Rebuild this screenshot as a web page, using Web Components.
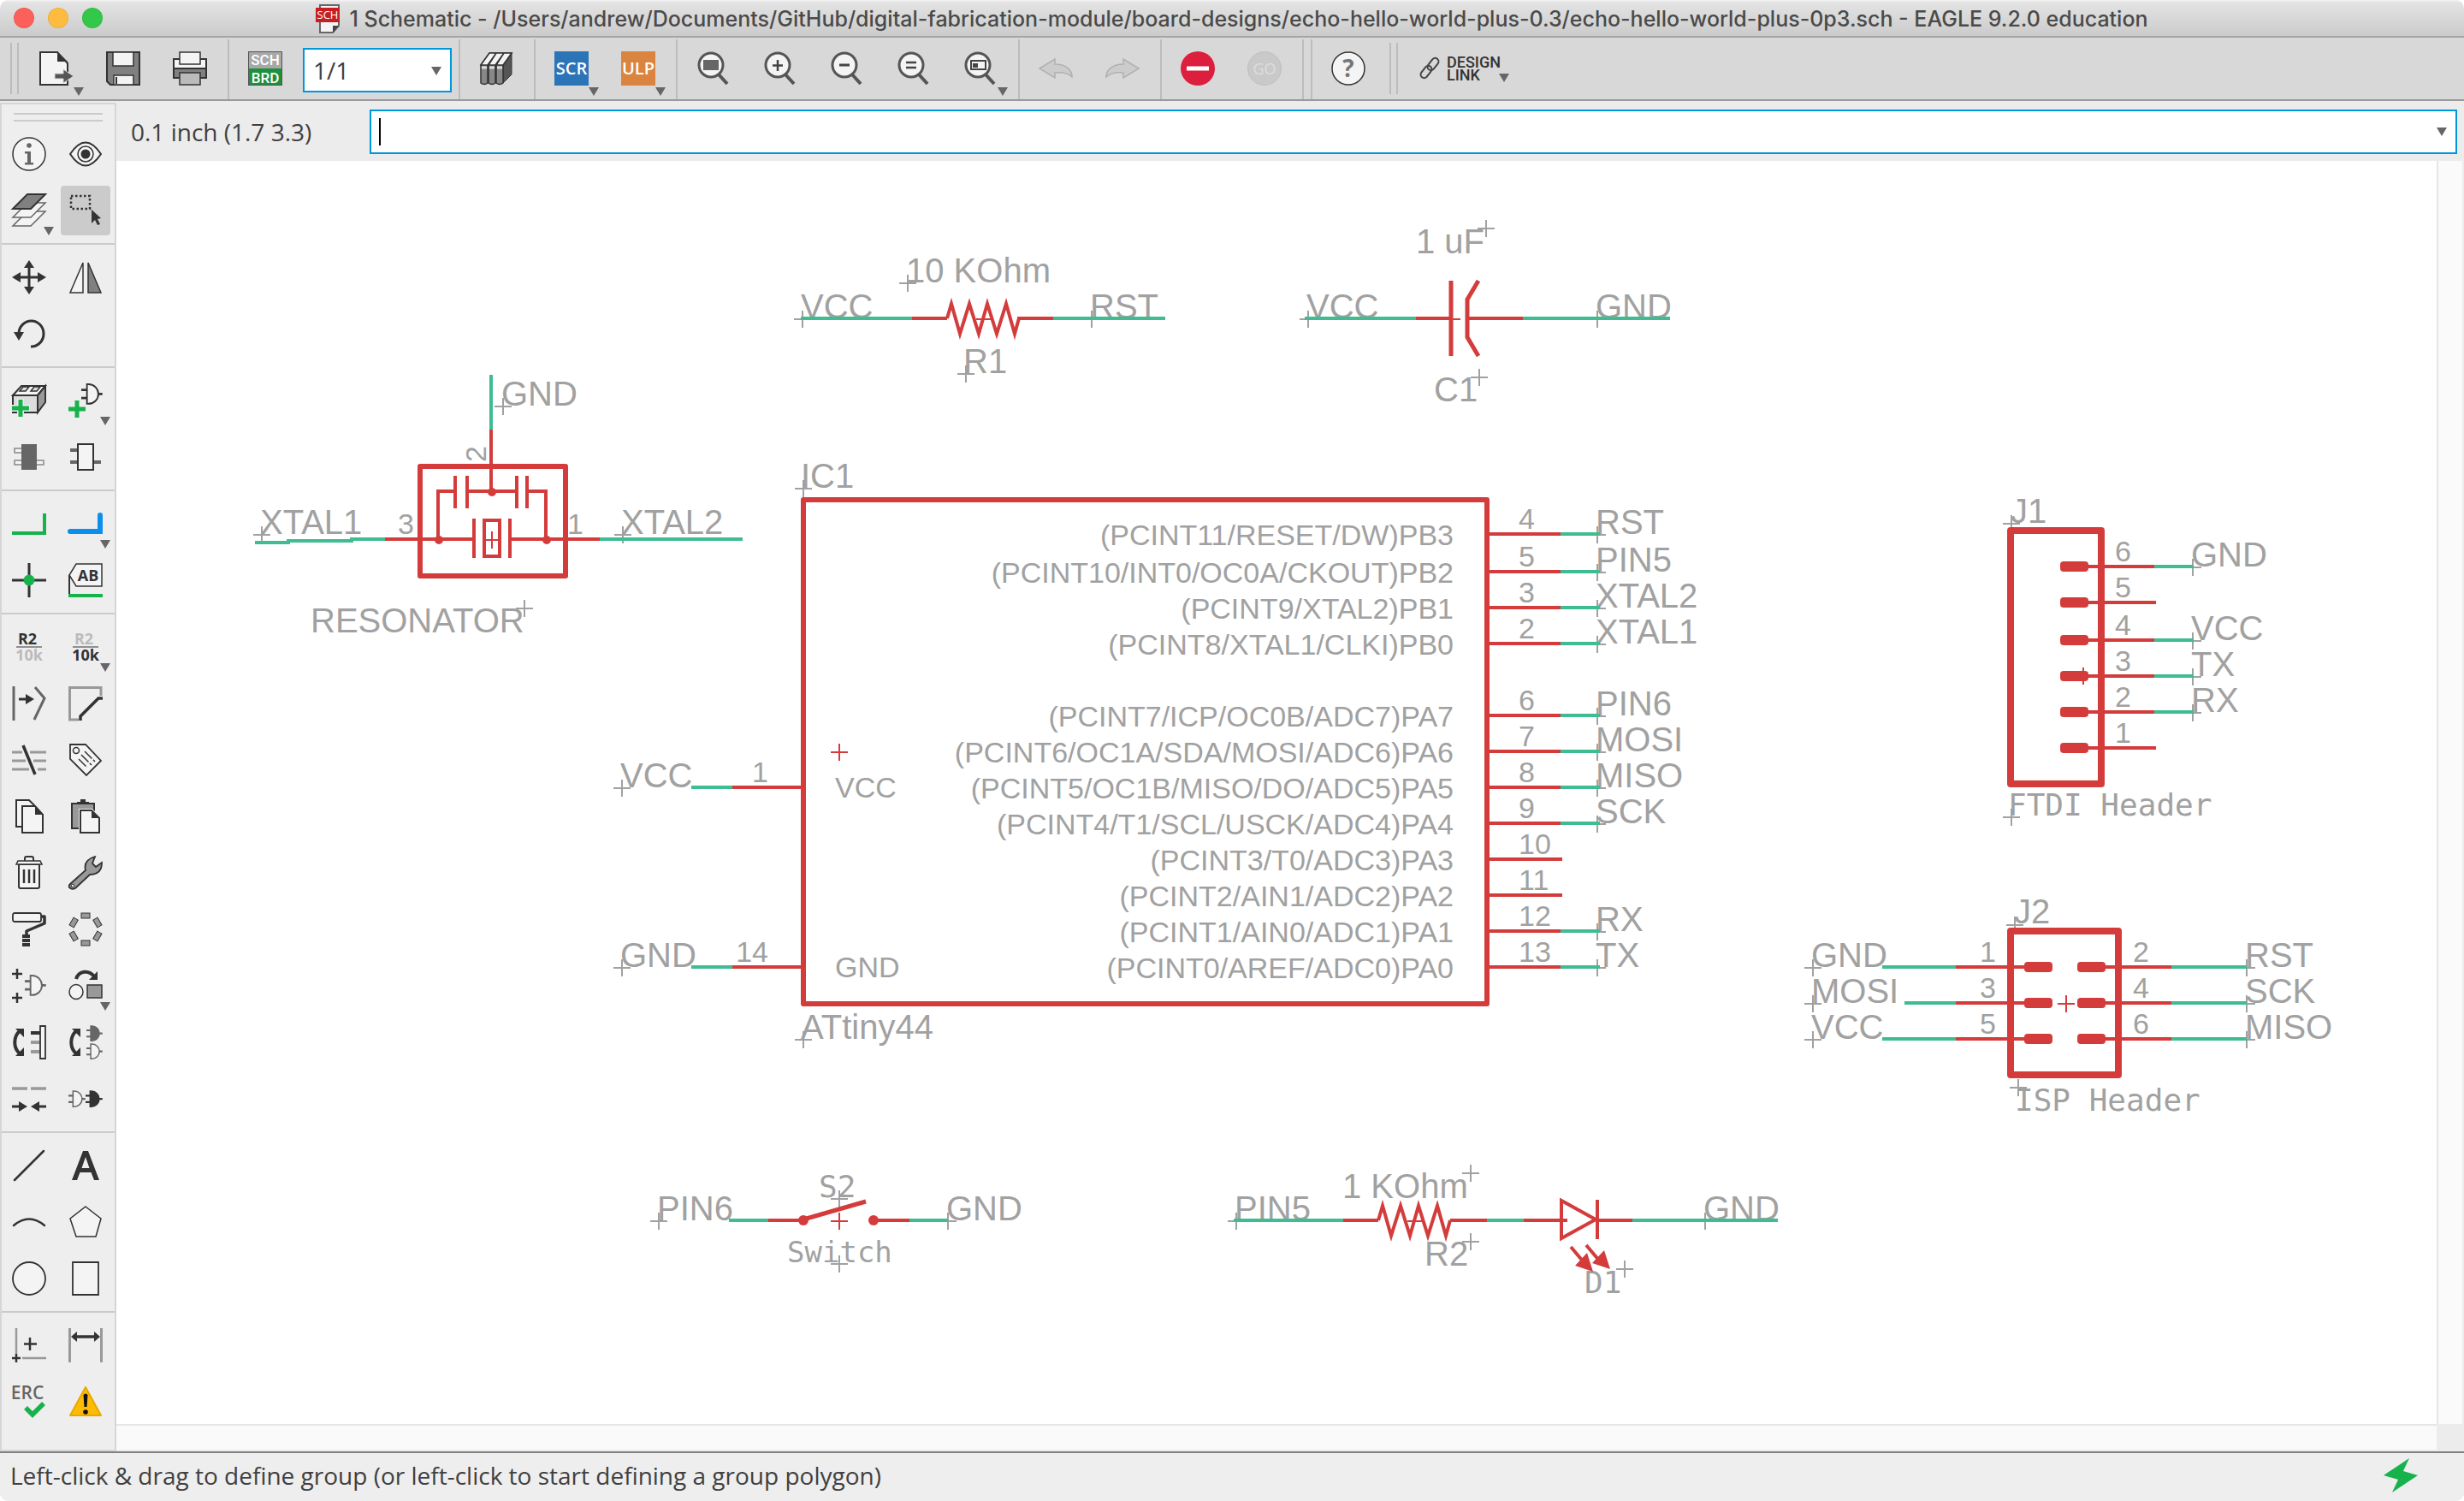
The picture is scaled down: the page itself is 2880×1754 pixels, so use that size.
<!DOCTYPE html>
<html lang="en">
<head>
<meta charset="utf-8">
<title>1 Schematic - EAGLE 9.2.0 education</title>
<style>
html,body{margin:0;height:100%;background:#fff}
body{font-family:"Open Sans","Noto Sans",sans-serif;font-size:28px;color:#404040}
</style>
</head>
<body>
<eagle-window></eagle-window>
<script>
const D='#333', G='#666', L='#999', W='#f4f4f4', GR='#16b24b';
const gate=(x,y,s,c,f)=>`<g transform="translate(${x} ${y}) scale(${s})" stroke="${c}" fill="${f}" stroke-width="2"><path d="M0 7H7M0 17H7M19 12H26" stroke-width="3"/><path d="M7 0V24H9A12 12 0 0 0 9 0Z"/></g>`;
const lens=inner=>`<path d="M26 27L36 38" stroke="#555" stroke-width="4"/><circle cx="17" cy="16" r="14" fill="${W}" stroke="#555" stroke-width="3"/>${inner}`;
const arrowUndo=`<path d="M1 20L19 9V15C31 15 39 21 39 30C34 25 28 24 19 25V31Z" fill="#ccc" stroke="#b0b0b0" stroke-width="1.5"/>`;
const swap=`<path d="M10 6C1 13 1 27 10 34" fill="none" stroke="${D}" stroke-width="4"/><path d="M4 4H14V14ZM4 36H14V26Z" fill="${D}"/>`;
const txt=(x,y,s,w,f,t,a='middle')=>`<text x="${x}" y="${y}" font-size="${s}" font-weight="${w}" fill="${f}" text-anchor="${a}">${t}</text>`;
const ICONS={
 newdoc:`<path d="M1 1H21L33 14V39H1Z" fill="${W}" stroke="${D}" stroke-width="2"/><path d="M21 1V12H33Z" fill="${D}"/><path d="M18 26H28V21L40 29L28 37V32H18Z" fill="#555" stroke="#d8d8d8" stroke-width="1"/>`,
 save:`<path d="M1 1H39V39H5L1 35Z" fill="#808080" stroke="${D}" stroke-width="2"/><path d="M8 1H32V17H8ZM9 28H32V39H9Z" fill="${W}" stroke="${D}" stroke-width="1.5"/><path d="M12 30V38" stroke="${D}" stroke-width="2"/>`,
 print:`<path d="M1 9H39V31H1Z" fill="${W}" stroke="${D}" stroke-width="2"/><path d="M1 20H39V31H1Z" fill="#808080" stroke="${D}" stroke-width="2"/><path d="M8 1H32V15H8Z" fill="${W}" stroke="${D}" stroke-width="1.5"/><path d="M8 25H32V39H8Z" fill="#bbb" stroke="${D}" stroke-width="1.5"/>`,
 schbrd:`<path d="M0 0H40V20H0Z" fill="#a8a8a8"/><path d="M0 20H40V40H0Z" fill="#1d8f3f"/><rect x=".5" y=".5" width="39" height="39" fill="none" stroke="#555"/><g font-family="Roboto">${txt(20,16,17,500,'#fff','SCH')}${txt(20,37,17,500,'#fff','BRD')}</g>`,
 lib:`<path d="M28 37L38 27V3L28 15Z" fill="#555" stroke="${D}"/><g stroke="${D}" stroke-width="1.5"><path d="M2 16L12 2H20L10 16V37Q6 40 2 37ZM11 16L20 2H29L19 16V37Q15 40 11 37ZM20 16L29 2H38L28 16V37Q24 40 20 37Z" fill="#888"/><path d="M2 16L12 2H20L10 16ZM11 16L20 2H29L19 16ZM20 16L29 2H38L28 16Z" fill="${W}"/></g><path d="M3 19H9M12 19H18M21 19H27" stroke="#ddd" stroke-width="3"/>`,
 scr:`<path d="M0 0H40V40H0Z" fill="#2c74b8"/>${txt(20,27,20,600,'#fff','SCR')}`,
 ulp:`<path d="M0 0H40V40H0Z" fill="#db843f"/>${txt(20,27,20,600,'#fff','ULP')}`,
 zfit:lens(`<path d="M8 10H26V22H8Z" fill="#666"/>`),
 zin:lens(`<path d="M17 10V23M11 16.500H23" stroke="#444" stroke-width="2.500"/>`),
 zout:lens(`<path d="M11 16H23" stroke="#444" stroke-width="3"/>`),
 zre:lens(`<path d="M11 13H23M11 19H23" stroke="#444" stroke-width="2.500"/>`),
 zsel:lens(`<path d="M9 11H26V21H9Z" fill="none" stroke="#444" stroke-width="2"/><path d="M11 14H17V19H11Z" fill="#444"/>`),
 undo:arrowUndo, redo:`<g transform="translate(40 0) scale(-1 1)">${arrowUndo}</g>`,
 stop:`<circle cx="20" cy="20" r="20" fill="#dc1f3c"/><path d="M7 17.500H33V22.500H7Z" fill="#fff"/>`,
 go:`<circle cx="20" cy="20" r="19.500" fill="#c9c9c9" stroke="#c0c0c0"/>${txt(20,27,18,400,'#dedede','GO')}`,
 help:`<circle cx="20" cy="20" r="19" fill="${W}" stroke="${D}" stroke-width="1.500"/>${txt(20,30,28,700,'#777','?')}`,
 link:`<g fill="none" stroke="#444" stroke-width="2"><rect x="-8" y="-4" width="16" height="8" rx="4" transform="translate(15 24) rotate(-52)"/><rect x="-8" y="-4" width="16" height="8" rx="4" transform="translate(23 15) rotate(-52)"/></g>`,
 info:`<circle cx="20" cy="20" r="19" fill="${W}" stroke="${D}" stroke-width="1.500"/><circle cx="20" cy="10" r="2.800" fill="${G}"/><path d="M15 17H22V30H25V32.500H15V30H18V19.500H15Z" fill="${G}"/>`,
 eye:`<path d="M2 20Q20 -7 38 20Q20 47 2 20Z" fill="${W}" stroke="${D}" stroke-width="2"/><circle cx="20" cy="20" r="9" fill="none" stroke="${D}" stroke-width="1.500"/><circle cx="20" cy="20" r="5.500" fill="${D}"/>`,
 layers:`<path d="M18 21H39L22 38H1Z" fill="${W}" stroke="${G}" stroke-width="1.500"/><path d="M18 11H39L22 28H1Z" fill="${W}" stroke="${G}" stroke-width="1.500"/><path d="M18 1H39L22 18H1Z" fill="#808080" stroke="${D}" stroke-width="2"/>`,
 group:`<path d="M3 3H25V18H3Z" fill="none" stroke="${D}" stroke-width="2.500" stroke-dasharray="2.500 2.500"/><path d="M27 19V35L31 31L34 37L37 36L34 30L38 29Z" fill="${D}"/>`,
 move:`<path d="M20 6V34M6 20H34" stroke="${D}" stroke-width="3"/><path d="M20 0L26 9H14ZM20 40L26 31H14ZM0 20L10 14V26ZM40 20L30 14V26Z" fill="${D}"/>`,
 mirror:`<path d="M17 3V38H2Z" fill="${W}" stroke="${D}" stroke-width="1.500"/><path d="M23 3V38H38Z" fill="#808080" stroke="${D}" stroke-width="1.500"/>`,
 rotate:`<path d="M8 20A14.500 15 0 1 1 22 35" fill="none" stroke="${D}" stroke-width="3"/><path d="M2 18H14L8 28Z" fill="${D}"/>`,
 addpart:`<path d="M1 14L11 3H39L30 14Z" fill="${W}" stroke="${D}" stroke-width="2"/><path d="M30 14L39 3V22L30 34Z" fill="#999" stroke="${D}" stroke-width="2"/><path d="M1 14H30V34H1Z" fill="#ddd" stroke="${D}" stroke-width="2"/><path d="M9 9L13 4H20L16 9ZM22 9L26 4H33L29 9Z" fill="#ddd" stroke="${D}" stroke-width="1.500"/><path d="M10 18V39M-1 29H21" stroke="#eee" stroke-width="8"/><path d="M10 19V39M0 29H20" stroke="${GR}" stroke-width="5"/>`,
 addgate:gate(15,1,.95,D,W)+`<path d="M10 20V40M0 30H20" stroke="${GR}" stroke-width="5"/>`,
 chip1:`<path d="M3 10H12V15H3ZM3 24H12V29H3ZM28 24H37V29H28Z" fill="${W}" stroke="#888" stroke-width="1.500"/><path d="M11 5H29V35H11Z" fill="${G}"/>`,
 chip2:`<path d="M2 12H12M2 26H12M28 26H38" stroke="${G}" stroke-width="4"/><path d="M11 5H29V35H11Z" fill="${W}" stroke="${D}" stroke-width="2"/>`,
 net:`<path d="M0 31H38V8" fill="none" stroke="${GR}" stroke-width="4"/>`,
 bus:`<path d="M2 29H37V10" fill="none" stroke="#0a8fee" stroke-width="6" stroke-linecap="round"/>`,
 junction:`<path d="M20 0V40M0 20H40" stroke="${D}" stroke-width="3"/><circle cx="20" cy="20" r="6.500" fill="${GR}"/>`,
 label:`<path d="M9 1H39V27H9L1 14Z" fill="${W}" stroke="${D}" stroke-width="1.500"/><path d="M1 14V38" stroke="${D}" stroke-width="2"/><path d="M0 38H40" stroke="${GR}" stroke-width="4"/>${txt(23,21,18,700,D,'AB')}`,
 name:`${txt(18,17,18,700,D,'R2')}<path d="M5 20H35" stroke="${D}"/>${txt(20,36,18,700,'#bbb','10k')}`,
 value:`${txt(18,17,18,700,'#bbb','R2')}<path d="M5 20H35" stroke="${D}"/>${txt(20,36,18,700,D,'10k')}`,
 smash:`<path d="M2 0V40" stroke="${G}" stroke-width="3"/><path d="M27 1L38 14L26 39" fill="none" stroke="${G}" stroke-width="3"/><path d="M8 15H18" stroke="${D}" stroke-width="3"/><path d="M16 9L26 15L16 21Z" fill="${D}"/>`,
 miter:`<path d="M12 39H1.500V1.500H38V11" fill="none" stroke="${L}" stroke-width="3"/><path d="M14 40V35L35 14H40" fill="none" stroke="${D}" stroke-width="3.500"/>`,
 split:`<path d="M0 11H12M21 11H40M0 21H16M25 21H40M0 31H20M30 31H40" stroke="${L}" stroke-width="3"/><path d="M13 3L27 37" stroke="${D}" stroke-width="3.500"/>`,
 tag:`<path d="M2 2H20L38 21L21 38L2 19Z" fill="${W}" stroke="${D}" stroke-width="1.800"/><circle cx="9" cy="9" r="3.500" fill="none" stroke="${D}" stroke-width="1.500"/><path d="M19 10L31 22M15 14L27 26M12 19L22 29" stroke="${D}" stroke-width="1.500" stroke-dasharray="12 2 3 2"/>`,
 copy:`<path d="M5 1H20L26 7V32H5Z" fill="${W}" stroke="${D}" stroke-width="2"/><path d="M12 8H27L36 18V39H12Z" fill="${W}" stroke="${D}" stroke-width="2"/><path d="M27 8V18H36Z" fill="${D}"/>`,
 paste:`<path d="M4 5H30V34H4Z" fill="#999" stroke="${D}" stroke-width="2"/><path d="M10 6V3H14V0H20V3H24V6Z" fill="${D}"/><path d="M14 13H27L36 22V39H14Z" fill="${W}" stroke="#eee" stroke-width="4"/><path d="M14 13H27L36 22V39H14Z" fill="${W}" stroke="${D}" stroke-width="2"/><path d="M27 13V22H36Z" fill="${D}"/>`,
 trash:`<path d="M15 6V3Q15 1 17 1H23Q25 1 25 3V6" fill="none" stroke="${D}" stroke-width="2"/><path d="M8 10H32V36Q32 38 30 38H10Q8 38 8 36Z" fill="${W}" stroke="${D}" stroke-width="2"/><path d="M7 6H33L35 10H5Z" fill="${W}" stroke="${D}" stroke-width="1.500"/><path d="M14 16V32M20 16V32M26 16V32" stroke="${D}" stroke-width="2.500"/>`,
 wrench:`<path d="M2 33L20 17Q17 5 31 1L28 9L32 13L39 8Q39 22 25 22L8 38Q4 40 1 37Q0 35 2 33Z" fill="#999" stroke="${D}" stroke-width="1.800"/><circle cx="5" cy="35" r="1.800" fill="${W}" stroke="${D}"/>`,
 paint:`<rect x="1" y="1" width="33" height="10" rx="2" fill="${W}" stroke="${D}" stroke-width="1.800"/><path d="M34 5H38V13L17 22V26" fill="none" stroke="${D}" stroke-width="3.500" stroke-linejoin="round"/><path d="M12 28H21M12 33H21M12 38H21" stroke="${D}" stroke-width="4"/>`,
 array:[0,60,120,180,240,300].map(a=>`<rect x="15" y="1" width="10" height="6" fill="#999" stroke="${D}" transform="rotate(${a} 20 20)"/>`).join(''),
 gates:`<path d="M6 0V12M0 6H12M6 28V40M0 34H12" stroke="${D}" stroke-width="2.500"/>`+gate(15,8,.95,G,W),
 replace:`<path d="M9 12C12 2 24 1 30 9" fill="none" stroke="${D}" stroke-width="4"/><path d="M34 3V13H24Z" fill="${D}"/><ellipse cx="9" cy="27" rx="8" ry="8.500" fill="${W}" stroke="${D}" stroke-width="1.500"/><path d="M22 19H39V34H22Z" fill="#999" stroke="${D}" stroke-width="1.500"/>`,
 pinswap:swap+`<path d="M22 9H33" stroke="${D}" stroke-width="4"/><path d="M22 20H33M22 31H33" stroke="${L}" stroke-width="4"/><path d="M33 1H39V39H33Z" fill="${W}" stroke="${D}" stroke-width="1.800"/>`,
 gateswap:swap+gate(21,1,.72,G,G)+gate(21,22,.72,G,W),
 gap:`<path d="M0 8H18M22 8H40" stroke="${L}" stroke-width="3.500"/><path d="M0 29H10M30 29H40" stroke="${D}" stroke-width="3"/><path d="M8 23L18 29L8 35ZM32 23L22 29L32 35Z" fill="${D}"/>`,
 plug:gate(0,11,.76,G,W)+gate(20,11,.76,D,D),
 line:`<path d="M3 37L37 3" stroke="${D}" stroke-width="2.500" stroke-linecap="round"/>`,
 text:`<path d="M4 37L17 3H23L36 37H30L26.500 28H13.500L10 37ZM15.500 23H24.500L20 10Z" fill="${D}"/>`,
 arc:`<path d="M2 24Q20 9 38 24" fill="none" stroke="${D}" stroke-width="2.500" stroke-linecap="round"/>`,
 poly:`<path d="M20 2L38 16L32 37H9L2 16Z" fill="${W}" stroke="${D}" stroke-width="1.500"/>`,
 circle:`<circle cx="20" cy="20" r="19" fill="${W}" stroke="${D}" stroke-width="1.800"/>`,
 rect:`<path d="M5 1H35V39H5Z" fill="${W}" stroke="${D}" stroke-width="1.800"/>`,
 mark:`<path d="M5 0V30M12 35H40" stroke="${L}" stroke-width="2.500"/><path d="M5 30V40M0 35H10M21 11V26M14 18.500H29" stroke="${D}" stroke-width="2.500"/>`,
 dim:`<path d="M1.500 0V40M38.500 0V40" stroke="${L}" stroke-width="3"/><path d="M8 10H32" stroke="${D}" stroke-width="3.500"/><path d="M3 10L10 4V16ZM37 10L30 4V16Z" fill="${D}"/>`,
 erc:`${txt(18,17,21,600,G,'ERC')}<path d="M16 27L24 35L37 22" fill="none" stroke="${GR}" stroke-width="5.500"/>`,
 warn:`<path d="M20 3L38 36H2Z" fill="#fdbb07" stroke="#e9a800" stroke-width="2" stroke-linejoin="round"/><path d="M17.500 12Q20 9 22.500 12L21.500 26H18.500Z" fill="#111"/><circle cx="20" cy="32" r="2.800" fill="#111"/>`,
 bolt:`<path d="M30 0L0 20L17 25L10 40L40 20L23 15Z" fill="${GR}"/>`
};
const svg=(n,w=40)=>`<svg viewBox="0 0 40 40" width="${w}" height="${w}" aria-hidden="true">${ICONS[n]}</svg>`;
const make=(tag,fn)=>customElements.define(tag,class extends HTMLElement{
  connectedCallback(){ if(!this.shadowRoot) this.attachShadow({mode:'open'}).innerHTML=fn(this); }
});

make('tool-button',el=>`<style>
:host{display:block;position:relative;width:var(--tool,64px);height:var(--tool,64px)}
button{all:unset;box-sizing:border-box;width:100%;height:100%;display:flex;align-items:center;justify-content:center;border-radius:4px;font-family:"Open Sans",sans-serif}
:host([active]) button{background:#cbcbcb}
svg{display:block;overflow:visible}
i{position:absolute;right:0;bottom:0;border:6px solid transparent;border-top:10px solid #666;border-bottom:0}
</style><button type="button" aria-label="${el.getAttribute('label')}">${svg(el.getAttribute('icon'))}</button>${el.hasAttribute('menu')?'<i></i>':''}`);

make('tool-separator',()=>`<style>:host{display:block;align-self:stretch;width:2px;margin:2px 10px 0 12px;background:#bcbcbc}</style>`);

make('title-bar',()=>`<style>
:host{display:grid;grid-template-columns:1fr auto 1fr;align-items:center;height:42px;background:linear-gradient(#f4f4f4,#e3e3e3 3px,#cbcbcb);border-bottom:2px solid #a5a5a5}
.lights{display:flex;gap:16px;padding-left:16px}
.lights b{width:24px;height:24px;border-radius:50%;box-sizing:border-box;border:1px solid #0001}
h1{margin:0;padding-top:2px;display:flex;align-items:center;gap:11px;font:500 25px/36px Inter,Roboto,sans-serif;color:#4a4a4a;white-space:nowrap}
svg{display:block}
</style><div class="lights"><b style="background:#fc605b"></b><b style="background:#fdbc40"></b><b style="background:#34c84a"></b></div>
<h1><svg width="28" height="34" viewBox="0 0 28 34"><path d="M5 1H27V25L20 33H5Z" fill="#f4f4f4" stroke="#666" stroke-width="2"/><path d="M20 33V25H27Z" fill="#444"/><path d="M0 4H28V21H0Z" fill="#c81e22"/><text x="14" y="17" font-size="13" font-family="Open Sans" text-anchor="middle" fill="#fff">SCH</text></svg><slot></slot></h1><div></div>`);

make('tool-bar',()=>{
 const b=(i,l,m)=>`<tool-button icon="${i}" label="${l}"${m?' menu':''}></tool-button>`, s='<tool-separator></tool-separator>';
 return `<style>
:host{display:flex;align-items:center;height:72px;background:#d8d8d8;border-bottom:2px solid #999;padding-left:12px}
.grip{width:6px;height:60px;border:solid #bcbcbc;border-width:0 2px;margin-right:12px}
.g{display:flex;gap:14px;align-items:center}
.sheet{position:relative;margin:4px -4px 0 12px}
select{appearance:none;box-sizing:border-box;display:block;width:174px;height:52px;border:2px solid #0096dc;border-radius:0;background:#fff;padding:0 10px;margin:0;font:28px "Open Sans",sans-serif;color:#404040}
i{border:6px solid transparent;border-top:10px solid #666;border-bottom:0}
.sheet i{position:absolute;right:12px;top:22px}
.grip.two{margin:0 0 0 16px}
.design{all:unset;display:flex;align-items:center;font:500 18px/15px Roboto,sans-serif;color:#333;margin-left:18px}
.design svg{margin-right:-1px}
.design i{margin-top:22px;margin-left:-2px}
</style><div class="grip"></div>
<div class="g">${b('newdoc','New',1)+b('save','Save')+b('print','Print')}</div>${s}
<div class="g">${b('schbrd','Switch to board')}</div><div class="sheet"><select aria-label="Sheet"><option>1/1</option></select><i></i></div>${s}
<div class="g">${b('lib','Library')}</div>${s}
<div class="g">${b('scr','Script',1)+b('ulp','Run ULP',1)}</div>${s}
<div class="g">${b('zfit','Zoom to fit')+b('zin','Zoom in')+b('zout','Zoom out')+b('zre','Redraw')+b('zsel','Zoom select',1)}</div>${s}
<div class="g">${b('undo','Undo')+b('redo','Redo')}</div>${s}
<div class="g">${b('stop','Stop')+b('go','Go')}</div><tool-separator style="margin-right:0"></tool-separator><tool-separator style="margin-left:8px"></tool-separator>
<div class="g">${b('help','Help')}</div><div class="grip two"></div>
<button class="design" type="button">${svg('link')}<span>DESIGN<br>LINK</span><i></i></button>`;
});

make('tool-palette',()=>{
 const groups=[
 ['info','eye','layers*','group!'],['move','mirror','rotate'],['addpart','addgate*','chip1','chip2'],['net','bus*','junction','label'],
 ['name','value*','smash','miter','split','tag','copy','paste','trash','wrench','paint','array','gates','replace*','pinswap','gateswap','gap','plug'],
 ['line','text','arc','poly','circle','rect'],['mark','dim','erc','warn']];
 return `<style>
:host{display:block;box-sizing:border-box;width:136px;margin-top:2px;border:2px solid #d6d6d6;background:#eee;--tool:58px}
.grip{height:6px;border:solid #cbcbcb;border-width:2px 0;margin:10px 14px 5px}
.g{display:grid;grid-template-columns:58px 58px;gap:8px;padding:4px 0 4px 3px}
.g+.g{border-top:2px solid #cbcbcb;margin-top:5px;padding-top:9px}
</style><div class="grip"></div>${groups.map(g=>`<div class="g">${g.map(n=>{const k=n.replace(/[*!]/,'');return `<tool-button icon="${k}" label="${k}"${n.includes('*')?' menu':''}${n.includes('!')?' active':''}></tool-button>`}).join('')}</div>`).join('')}`;
});

make('command-bar',()=>`<style>
:host{display:flex;align-items:center;height:68px;background:#ececec;padding:2px 8px 0 0}
output{width:279px;padding-left:17px;font:28px/36px "Open Sans",sans-serif}
.box{flex:1;display:flex;align-items:center;box-sizing:border-box;height:52px;border:2px solid #0096dc;background:#fff;padding:0 10px 0 9px}
.caret{width:2px;height:32px;background:#000}
input{flex:1;min-width:0;border:0;outline:0;background:none;height:44px;font:28px "Open Sans",sans-serif;color:#404040;caret-color:transparent}
i{border:6px solid transparent;border-top:10px solid #666;border-bottom:0}
</style><output>0.1 inch (1.7 3.3)</output><div class="box"><span class="caret"></span><input type="text" aria-label="Command line"><i></i></div>`);

/* ---- schematic sheet ---- */
const RED='#d43c3c', GRN='#3fbc92', TXT='#a1a1a1';
const wire=(d,c=GRN,w=4)=>`<path d="${d}" stroke="${c}" stroke-width="${w}" fill="none"/>`;
const red=(d,w=4)=>wire(d,RED,w);
const cross=(x,y,c=TXT)=>`<path d="M${x-10} ${y}H${x+10}M${x} ${y-10}V${y+10}" stroke="${c}" stroke-width="2"/>`;
const t=(x,y,s,cls='n',a='start')=>`<text x="${x}" y="${y}" class="${cls}" text-anchor="${a}">${s}</text>`;
const lab=(x,y,s)=>t(x,y,s)+cross(x+2,y+1);
const box=(x,y,x2,y2,w)=>`<rect x="${x}" y="${y}" width="${x2-x}" height="${y2-y}" fill="none" stroke="${RED}" stroke-width="${w}" stroke-linejoin="round"/>`;
const dot=(x,y,r=5)=>`<circle cx="${x}" cy="${y}" r="${r}" fill="${RED}"/>`;
const pad=(x,y)=>`<rect x="${x}" y="${y-6}" width="33" height="12" rx="4" fill="${RED}"/>`;
const zig=(x,y)=>red(`M${x} ${y}L${x+5} ${y-17}L${x+15} ${y+18}L${x+26} ${y-17}L${x+37} ${y+18}L${x+47} ${y-17}L${x+58} ${y+18}L${x+69} ${y-17}L${x+79} ${y+18}L${x+84} ${y}`)+red(`M${x+34} ${y+1}H${x+53}`,2);
const sheet=()=>{
 let o='';
 // resonator
 o+=lab(586,474,'GND')+`<text class="p" transform="translate(568 540) rotate(-90)">2</text>`+lab(304,624,'XTAL1')+lab(726,624,'XTAL2')+t(465,624,'3','p')+t(663,624,'1','p')+t(363,739,'RESONATOR')+cross(613,711);
 o+=wire('M574 438V502M298 634H337V632H411V630H450M700 630H868')+red('M574 502V574M512 630V574H532M546 574H604M616 574H638V630M532 556V594M546 556V594M604 556V594M616 556V594M450 630H554M596 630H701M554 606V652M596 606V652M566 608H584V650H566Z')+box(491,545,661,673,6)+dot(575,575)+dot(513,631)+dot(639,631)+cross(575,631,RED);
 // R1
 o+=lab(936,372,'VCC')+lab(1274,372,'RST')+t(1059,330,'10 KOhm')+cross(1061,331)+t(1126,436,'R1')+cross(1129,437);
 o+=wire('M936 372H1066M1231 372H1362')+red('M1066 372H1107M1189 372H1231')+zig(1107,372);
 // C1
 o+=lab(1527,372,'VCC')+lab(1865,372,'GND')+t(1655,296,'1 uF')+cross(1737,267)+t(1676,469,'C1')+cross(1729,441);
 o+=wire('M1525 372H1655M1780 372H1952')+red('M1655 372H1696M1715 372H1780')+red('M1696 328V416M1728 328L1715 350V394L1728 416',5)+cross(1697,373,RED);
 // IC1
 o+=t(936,570,'IC1')+cross(939,571)+t(936,1214,'ATtiny44')+cross(939,1215)+box(939,584,1738,1173,6)+cross(981,879,RED);
 [[624,4,'(PCINT11/RESET/DW)PB3','RST'],[668,5,'(PCINT10/INT0/OC0A/CKOUT)PB2','PIN5'],[710,3,'(PCINT9/XTAL2)PB1','XTAL2'],[752,2,'(PCINT8/XTAL1/CLKI)PB0','XTAL1'],[836,6,'(PCINT7/ICP/OC0B/ADC7)PA7','PIN6'],[878,7,'(PCINT6/OC1A/SDA/MOSI/ADC6)PA6','MOSI'],[920,8,'(PCINT5/OC1B/MISO/DO/ADC5)PA5','MISO'],[962,9,'(PCINT4/T1/SCL/USCK/ADC4)PA4','SCK'],[1004,10,'(PCINT3/T0/ADC3)PA3'],[1046,11,'(PCINT2/AIN1/ADC2)PA2'],[1088,12,'(PCINT1/AIN0/ADC1)PA1','RX'],[1130,13,'(PCINT0/AREF/ADC0)PA0','TX']]
 .forEach(([y,n,s,l])=>{o+=t(1699,y+13,s,'p','end')+t(1775,y-6,n,'p')+red(`M1738 ${y}H1826`);if(l)o+=lab(1865,y,l)+wire(`M1824 ${y}H1870`)});
 [[920,'VCC',1],[1130,'GND',14]].forEach(([y,l,n])=>{o+=lab(725,y,l)+t(898,y-6,n,'p','end')+t(976,y+12,l,'p')+wire(`M808 ${y}H856`)+red(`M856 ${y}H937`)});
 // J1
 o+=t(2350,611,'J1')+cross(2351,612)+t(2347,953,'FTDI Header','v')+cross(2351,955);
 [[662,6,'GND'],[704,5],[748,4,'VCC'],[790,3,'TX'],[832,2,'RX'],[874,1]].forEach(([y,n,l])=>{o+=t(2472,y-6,n,'p')+pad(2408,y)+red(`M2440 ${y}H2520`);if(l)o+=lab(2561,y,l)+wire(`M2518 ${y}H2564`)});
 o+=box(2350,620,2456,916,8)+cross(2435,790,RED);
 // J2
 o+=t(2354,1079,'J2')+cross(2355,1081)+t(2355,1298,'ISP Header','v')+cross(2359,1271);
 [[1130,1,2,'GND','RST',2200],[1172,3,4,'MOSI','SCK',2226],[1214,5,6,'VCC','MISO',2200]].forEach(([y,a,b,l,r,x])=>{
  o+=t(2314,y-6,a,'p')+t(2493,y-6,b,'p')+lab(2117,y,l)+lab(2624,y,r)+pad(2366,y)+pad(2428,y)+wire(`M${x} ${y}H2288M2536 ${y}H2626`)+red(`M2286 ${y}H2370M2460 ${y}H2538`)});
 o+=box(2350,1088,2476,1256,8)+cross(2415,1173,RED);
 // switch
 o+=lab(768,1426,'PIN6')+lab(1106,1426,'GND')+t(957,1399,'S2','v')+cross(981,1401)+t(920,1475,'Switch','w')+cross(981,1477);
 o+=wire('M852 1426H898M1063 1426H1108')+red('M898 1426H939M1020 1426H1063')+red('M939 1425L1012 1404',5)+dot(939,1426,6)+dot(1021,1426,6)+cross(981,1427,RED);
 // R2 + LED
 o+=lab(1443,1426,'PIN5')+lab(1991,1426,'GND')+t(1569,1400,'1 KOhm')+cross(1719,1371)+t(1665,1479,'R2')+cross(1719,1451)+t(1852,1511,'D1','v')+cross(1899,1483);
 o+=wire('M1442 1426H1570M1736 1426H1781M1908 1426H2078')+red('M1570 1426H1611M1695 1426H1738M1781 1426H1832M1866 1426H1908')+zig(1611,1426)+red('M1825 1403V1447L1865 1425ZM1867 1402V1448M1836 1457L1852 1476M1854 1455L1870 1474')+`<path d="M1862 1486L1841 1479L1855 1464ZM1882 1483L1861 1476L1875 1461Z" fill="${RED}"/>`;
 return o;
};
make('schematic-sheet',()=>`<style>
:host{display:grid;grid-template:minmax(0,1fr) 32px / minmax(0,1fr) 32px;background:#ececec;min-height:0}
.paper{background:#fff;overflow:hidden}
svg{display:block;width:100%;height:100%}
.vs{border-left:2px solid #e5e5e5;background:#fafafa;margin-right:2px}
.hs{border-top:2px solid #e5e5e5;background:#fafafa;margin-bottom:2px}
text{fill:${TXT}}
.n{font:40px "Liberation Sans",sans-serif}
.p{font:34px "Liberation Sans",sans-serif}
.v{font:36px "DejaVu Sans Mono",monospace}
.w{font:34px "DejaVu Sans Mono",monospace}
</style><div class="paper"><svg viewBox="136 188 2712 1476" preserveAspectRatio="xMinYMin" role="img" aria-label="Schematic">${sheet()}</svg></div><div class="vs"></div><div class="hs"></div>`);

make('status-bar',()=>`<style>
:host{display:flex;align-items:center;justify-content:space-between;height:52px;padding:0 54px 4px 12px;border-top:2px solid #808080;background:#eee;font:28px/36px "Open Sans",sans-serif}
svg{display:block}
</style><span><slot></slot></span>${svg('bolt')}`);

make('eagle-window',()=>`<style>
:host{display:flex;flex-direction:column;height:100vh;overflow:hidden;border-radius:10px;background:#ececec}
.body{flex:1;min-height:0;display:flex}
.main{flex:1;min-width:0;display:flex;flex-direction:column}
title-bar,tool-bar,command-bar,status-bar{flex:none}
schematic-sheet{flex:1}
</style><title-bar>1 Schematic - /Users/andrew/Documents/GitHub/digital-fabrication-module/board-designs/echo-hello-world-plus-0.3/echo-hello-world-plus-0p3.sch - EAGLE 9.2.0 education</title-bar>
<tool-bar></tool-bar><div class="body"><tool-palette></tool-palette><div class="main"><command-bar></command-bar><schematic-sheet></schematic-sheet></div></div>
<status-bar>Left-click &amp; drag to define group (or left-click to start defining a group polygon)</status-bar>`);
</script>
</body>
</html>
